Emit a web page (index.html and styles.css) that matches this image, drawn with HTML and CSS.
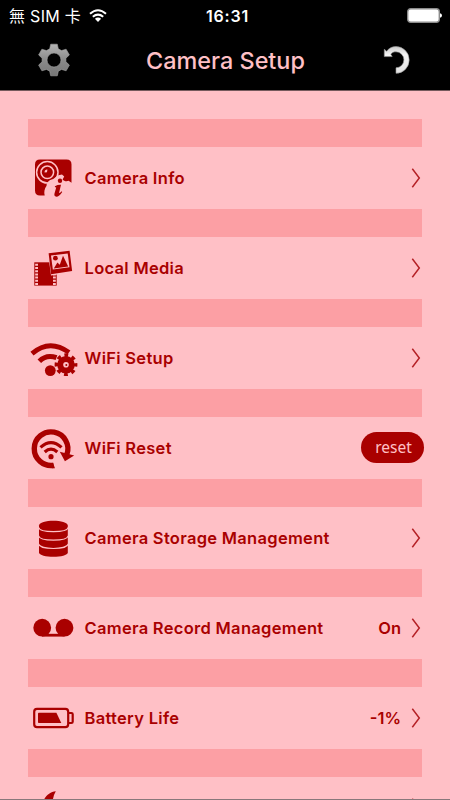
FILE: index.html
```html
<!DOCTYPE html>
<html lang="en">
<head>
    <meta charset="UTF-8">
    <meta name="viewport" content="width=device-width, initial-scale=1.0">
    <title>Camera Setup</title>
    <link rel="stylesheet" href="styles.css">
</head>
<body>

<header>
    <div class="status-bar">
        <div class="carrier">
            <span>無 SIM 卡</span>
            <svg class="wifi" width="18" height="14" viewBox="0 0 18 14">
                <path d="M1 4.8Q9-2.2 17 4.8M3.8 7.8Q9 3.4 14.2 7.8" fill="none" stroke="#fff" stroke-width="2"/>
                <path d="M5.9 9.8Q9 7.4 12.1 9.8L9 13Z" fill="#fff"/>
            </svg>
        </div>
        <div class="clock">16:31</div>
        <svg class="phone-battery" width="35" height="15" viewBox="0 0 35 15">
            <rect x=".7" y=".7" width="31.6" height="13.6" rx="3" fill="#fff" stroke="#8b8b8b" stroke-width="1.4"/>
            <path d="M33 5.2Q35 5.8 35 7.5T33 9.8Z" fill="#fff"/>
        </svg>
    </div>
    <div class="nav-bar">
        <svg width="34" height="34" viewBox="-17 -17 34 34">
            <defs>
                <linearGradient id="metal" x1="0" y1="0" x2="0" y2="1">
                    <stop offset="0" stop-color="#b4b4b4"/>
                    <stop offset=".5" stop-color="#8a8a8a"/>
                    <stop offset="1" stop-color="#777"/>
                </linearGradient>
            </defs>
            <path fill="url(#metal)" stroke="#a5a5a5" stroke-width=".6" fill-rule="evenodd" d="M-3.3-15.8H3.3L4.3-11.2 7.5-9.4 12.1-10.8 15.4-5.1 11.9-1.8V1.8L15.4 5.1 12.1 10.8 7.5 9.4 4.3 11.2 3.3 15.8H-3.3L-4.3 11.2-7.5 9.4-12.1 10.8-15.4 5.1-11.9 1.8V-1.8L-15.4-5.1-12.1-10.8-7.5-9.4-4.3-11.2ZM0-7A7 7 0 1 0 0 7A7 7 0 1 0 0-7Z"/>
        </svg>
        <h1>Camera Setup</h1>
        <svg width="27" height="30" viewBox="0 0 27 30">
            <defs>
                <linearGradient id="silver" x1="0" y1="0" x2="0" y2="1">
                    <stop offset="0" stop-color="#c9c9c9"/>
                    <stop offset=".3" stop-color="#f5f5f5"/>
                    <stop offset="1" stop-color="#e2e2e2"/>
                </linearGradient>
            </defs>
            <path fill="url(#silver)" stroke="#999" stroke-width=".6" d="M1.3 4.3 3.6 6.2C6.5 2.8 9.4 1.5 13 1.5A13.1 13.3 0 0 1 13 28.3V22.8A7.9 8 0 0 0 13 6.8C10.8 6.8 9 7.4 7.8 9.2L9.2 11.6H1.3Z"/>
        </svg>
    </div>
</header>

<main class="settings">
    <div class="band"></div>
    <div class="row">
        <svg class="icon" viewBox="0 0 52 62">
            <path class="fill" d="M12 12.4H38.5Q43.5 12.4 43.5 17.4V35.8L40.6 33.8C38.4 34.6 35.8 34 34.6 32.4L36.2 29.6 34 27.6 30.4 28.2 25.2 32C20.8 33 18.4 36 18.6 38.8 16.4 41.4 15.8 45.4 16.7 48.4H12Q7 48.4 7 43.4V17.4Q7 12.4 12 12.4Z"/>
            <circle class="ring" cx="19.3" cy="25.3" r="10.7"/>
            <circle class="ring" cx="19.3" cy="25.3" r="6.3"/>
            <path class="light" d="M19.4 22.5A2.5 2.5 0 0 0 16.6 25.5L19 25.3Z"/>
            <circle class="fill" cx="32" cy="33.8" r="2.2"/>
            <path class="fill" d="M27 39.2Q30 37.5 33 37.8L31.1 45.8Q32 46.3 33.6 44.2L34.2 44.9Q31.3 49.7 28.3 49.7 25.8 49.3 26.5 46.5L28.2 40.4 26.8 40.1Z"/>
        </svg>
        <span class="label">Camera Info</span>
        <svg class="arrow" viewBox="0 0 10 20"><path d="M1.3.8 8.3 10 1.3 19.2"/></svg>
    </div>
    <div class="band"></div>
    <div class="row">
        <svg class="icon" viewBox="0 0 52 62">
            <path class="fill" d="M6.3 25.3H28.7V48.6H6.3Z"/>
            <path class="film" d="M8.6 26.8V48.4M26.4 26.8V48.4"/>
            <path class="light" d="M19.8 14.7 42.6 12.2 45.2 35 23 38.6Z"/>
            <path class="fill" d="M20.6 16.2 41.6 13.7 44.1 34.1 23.1 37.3Z"/>
            <path class="light" d="M23 18.4 39.7 16.4 41.5 30.3 24.8 32.6Z"/>
            <circle class="fill" cx="27.4" cy="21.2" r="2.4"/>
            <path class="fill" d="M25.8 31.4 29.4 25.6 31.8 27.8 35 18.7 40.2 29.4Z"/>
        </svg>
        <span class="label">Local Media</span>
        <svg class="arrow" viewBox="0 0 10 20"><path d="M1.3.8 8.3 10 1.3 19.2"/></svg>
    </div>
    <div class="band"></div>
    <div class="row">
        <svg class="icon" viewBox="0 0 52 62">
            <path class="line" stroke-width="4.8" d="M4 26.6Q21.5 11.4 41 25.4"/>
            <path class="line" stroke-width="5" d="M11.3 34.2Q18.5 27 28.5 30.7"/>
            <circle class="fill" cx="22.3" cy="43.6" r="5.4"/>
            <circle class="light" cx="38" cy="37.7" r="10.4"/>
            <circle class="fill" cx="38" cy="37.7" r="8.8"/>
            <circle class="line" cx="38" cy="37.7" r="9.5" stroke-width="3.8" stroke-dasharray="3.73 3.73" stroke-dashoffset="1.87"/>
            <circle class="light" cx="38" cy="37.7" r="2.8"/>
            <circle class="fill" cx="38.3" cy="38" r="1"/>
        </svg>
        <span class="label">WiFi Setup</span>
        <svg class="arrow" viewBox="0 0 10 20"><path d="M1.3.8 8.3 10 1.3 19.2"/></svg>
    </div>
    <div class="band"></div>
    <div class="row">
        <svg class="icon" viewBox="0 0 52 62">
            <path class="line" stroke-width="5.4" d="M25.7 48.3A16.8 16.8 0 1 1 38.8 37.6"/>
            <path class="fill" d="M24.8 45.4 23.8 51.2 27 51.2Z"/>
            <path class="fill" d="M31.8 34.8 46.2 38.6 36.9 44.2Z"/>
            <path class="line" stroke-width="3.2" d="M12.5 30.4Q23 20.8 33.5 30.4M16.7 35Q23 29.2 29.3 35"/>
            <circle class="fill" cx="23" cy="39.7" r="2.6"/>
        </svg>
        <span class="label">WiFi Reset</span>
        <button class="reset">reset</button>
    </div>
    <div class="band"></div>
    <div class="row">
        <svg class="icon" viewBox="0 0 52 62">
            <path class="fill" d="M11 18.6C11 12.2 39.8 12.2 39.8 18.6V45.5C39.8 51.2 11 51.2 11 45.5Z"/>
            <path class="groove" d="M10.6 20.3C12 26 38.8 26 40.2 20.3M10.6 28.8C12 34.5 38.8 34.5 40.2 28.8M10.6 37C12 42.9 38.8 42.9 40.2 37"/>
        </svg>
        <span class="label">Camera Storage Management</span>
        <svg class="arrow" viewBox="0 0 10 20"><path d="M1.3.8 8.3 10 1.3 19.2"/></svg>
    </div>
    <div class="band"></div>
    <div class="row">
        <svg class="icon" viewBox="0 0 52 62">
            <circle class="fill" cx="14.2" cy="30.7" r="8.9"/>
            <circle class="fill" cx="36.5" cy="30.7" r="8.9"/>
            <path class="fill" d="M14 36.8H36.5V39.6H14Z"/>
        </svg>
        <span class="label">Camera Record Management</span>
        <span class="value">On</span>
        <svg class="arrow" viewBox="0 0 10 20"><path d="M1.3.8 8.3 10 1.3 19.2"/></svg>
    </div>
    <div class="band"></div>
    <div class="row">
        <svg class="icon" viewBox="0 0 52 62">
            <rect class="line" x="6.2" y="21.9" width="34" height="18.2" rx="2.8" stroke-width="2.2"/>
            <path class="line" stroke-width="2.2" d="M40.5 26H43.4Q44.7 26 44.7 27.3V34.8Q44.7 36 43.4 36H40.5"/>
            <path class="fill" d="M10.8 25.7H28.4L33.3 36H10.8Q10 36 10 35.2V26.5Q10 25.7 10.8 25.7Z"/>
        </svg>
        <span class="label">Battery Life</span>
        <span class="value">-1%</span>
        <svg class="arrow" viewBox="0 0 10 20"><path d="M1.3.8 8.3 10 1.3 19.2"/></svg>
    </div>
    <div class="band"></div>
    <div class="row">
        <svg class="icon" viewBox="0 0 52 62">
            <path class="fill" d="M27.8 14.3C20 15.3 14 22 14 31A17 17 0 0 0 42 44C30 45 21 34 25 22Q25.6 18 27.8 14.3Z"/>
        </svg>
        <span class="label"></span>
        <svg class="arrow" viewBox="0 0 10 20"><path d="M1.3.8 8.3 10 1.3 19.2"/></svg>
    </div>
</main>

</body>
</html>
```
FILE: styles.css
```css
* {
    box-sizing: border-box;
}

body {
    margin: 0;
    height: 800px;
    overflow: hidden;
    display: flex;
    flex-direction: column;
    font-family: Inter, "Noto Sans CJK TC", sans-serif;
    background-color: #ffc0c6;
    color: #a90000;
}

header {
    height: 91px;
    flex: none;
    background-color: #000;
    border-bottom: 1px solid #75595c;
}

.status-bar {
    height: 30px;
    display: grid;
    grid-template-columns: 1fr auto 1fr;
    align-items: center;
    padding: 1px 8px 0 9px;
    color: #fff;
    font-size: 16px;
}

.carrier {
    display: flex;
    align-items: center;
    gap: 8px;
    letter-spacing: 0.3px;
}

.carrier span {
    padding-bottom: 2px;
}

.clock {
    padding-left: 4px;
    font-weight: 600;
    letter-spacing: 0.8px;
}

.phone-battery {
    justify-self: end;
}

.nav-bar {
    height: 60px;
    display: flex;
    align-items: center;
    justify-content: space-between;
    padding: 0 40px 0 37px;
}

h1 {
    margin: 0 3px 0 0;
    font-size: 23.4px;
    font-weight: 500;
    color: #ffc0c6;
}

.settings {
    flex: 1;
    min-height: 0;
    overflow: hidden;
    padding: 28px 28px 0;
    border-bottom: 1px solid #88777a;
}

.band {
    height: 28px;
    background-color: #fc9fa4;
}

.row {
    height: 62px;
    display: flex;
    align-items: center;
}

.icon {
    width: 52px;
    height: 62px;
    flex: none;
}

.fill {
    fill: #a90000;
}

.light {
    fill: #ffc0c6;
}

.line {
    fill: none;
    stroke: #a90000;
}

.ring {
    fill: none;
    stroke: #ffc0c6;
    stroke-width: 1.5;
}

.groove {
    fill: none;
    stroke: #ffc0c6;
    stroke-width: 1.1;
}

.film {
    fill: none;
    stroke: #ffc0c6;
    stroke-width: 2.8;
    stroke-dasharray: 2 1.2;
}

.label {
    flex: 1;
    padding-left: 4.5px;
    white-space: nowrap;
}

.label, .value {
    font-size: 16.5px;
    font-weight: 600;
    letter-spacing: 0.3px;
}

.value {
    margin-right: 10px;
    letter-spacing: 0;
}

.arrow {
    width: 10px;
    height: 20px;
    margin-right: 1px;
    fill: none;
    stroke: #b52026;
    stroke-width: 1.5;
}

.reset {
    width: 63px;
    height: 31px;
    margin: 0 -2px 1px 0;
    padding: 0 0 1px 2px;
    border: none;
    border-radius: 16px;
    background-color: #a90000;
    color: #ffc0c6;
    font-family: "Noto Sans", sans-serif;
    font-size: 15.5px;
}
```
